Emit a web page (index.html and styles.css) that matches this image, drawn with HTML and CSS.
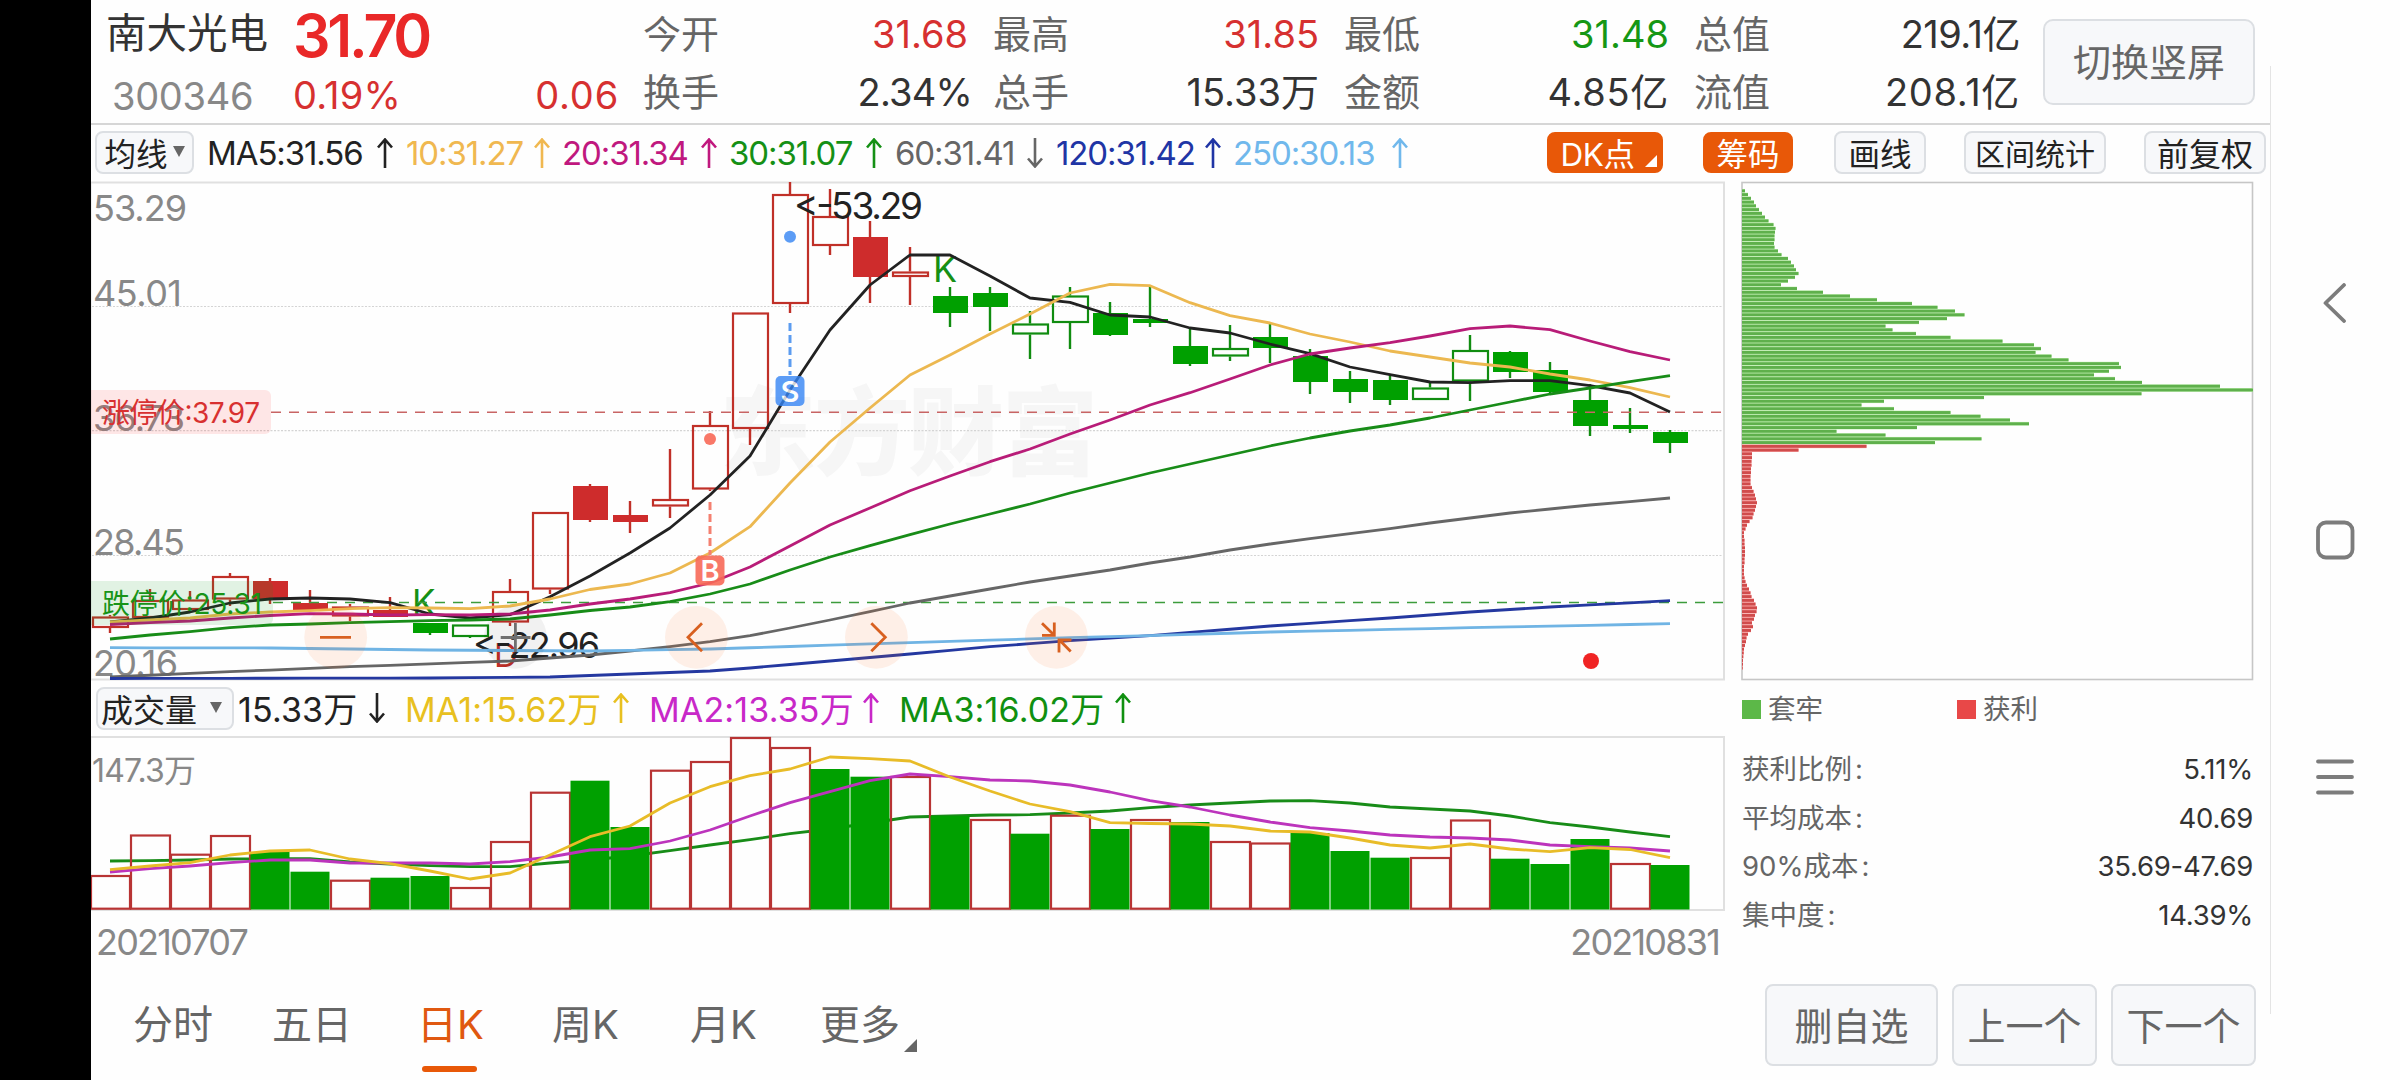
FILE: index.html
```html
<!DOCTYPE html>
<html lang="zh-CN">
<head>
<meta charset="utf-8">
<title>南大光电 300346</title>
<link rel="stylesheet" href="styles.css">
</head>
<body>
<div class="screen">
  <div class="cutout"></div>
  <main class="app">
    <header class="quote">
      <div class="stock">
        <div class="stock-name">南大光电</div>
        <div class="stock-code">300346</div>
      </div>
      <div class="price">
        <div class="price-last">31.70</div>
        <div class="price-change"><span>0.19%</span><span>0.06</span></div>
      </div>
      <dl class="metrics">
        <div class="metric m1"><dt>今开</dt><dd class="up">31.68</dd></div>
        <div class="metric m2"><dt>最高</dt><dd class="up">31.85</dd></div>
        <div class="metric m3"><dt>最低</dt><dd class="down">31.48</dd></div>
        <div class="metric m4"><dt>总值</dt><dd class="tight">219.1亿</dd></div>
        <div class="metric m1"><dt>换手</dt><dd class="tight pct">2.34%</dd></div>
        <div class="metric m2"><dt>总手</dt><dd>15.33万</dd></div>
        <div class="metric m3"><dt>金额</dt><dd class="loose">4.85亿</dd></div>
        <div class="metric m4"><dt>流值</dt><dd class="loose">208.1亿</dd></div>
      </dl>
      <button class="btn btn-rotate">切换竖屏</button>
    </header>

    <section class="toolbar">
      <button class="btn picker picker-ma">均线<i class="caret"></i></button>
      <div class="ma-list">
        <span class="ma ma5"><b>MA5:31.56</b><svg class="arr" viewBox="0 0 16 30"><path d="M8 1V30M1 9.500L8 1.500L15 9.500"/></svg></span>
        <span class="ma ma10"><b>10:31.27</b><svg class="arr" viewBox="0 0 16 30"><path d="M8 1V30M1 9.500L8 1.500L15 9.500"/></svg></span>
        <span class="ma ma20"><b>20:31.34</b><svg class="arr" viewBox="0 0 16 30"><path d="M8 1V30M1 9.500L8 1.500L15 9.500"/></svg></span>
        <span class="ma ma30"><b>30:31.07</b><svg class="arr" viewBox="0 0 16 30"><path d="M8 1V30M1 9.500L8 1.500L15 9.500"/></svg></span>
        <span class="ma ma60"><b>60:31.41</b><svg class="arr" viewBox="0 0 16 30"><path d="M8 0V29M1 20.500L8 28.500L15 20.500"/></svg></span>
        <span class="ma ma120"><b>120:31.42</b><svg class="arr" viewBox="0 0 16 30"><path d="M8 1V30M1 9.500L8 1.500L15 9.500"/></svg></span>
        <span class="ma ma250"><b>250:30.13</b><svg class="arr" viewBox="0 0 16 30"><path d="M8 1V30M1 9.500L8 1.500L15 9.500"/></svg></span>
      </div>
      <div class="tools">
        <button class="btn tool tool-dk">DK点<i class="corner"></i></button>
        <button class="btn tool tool-chip">筹码</button>
        <button class="btn tool tool-draw">画线</button>
        <button class="btn tool tool-range">区间统计</button>
        <button class="btn tool tool-adj">前复权</button>
      </div>
    </section>

    <div class="body">
      <div class="charts">
        <svg class="kline" id="kline" viewBox="91 181 1635 500"></svg>
        <div class="vol-head">
          <button class="btn picker picker-vol">成交量<i class="caret"></i></button>
          <span class="vol v0"><b>15.33万</b><svg class="arr" viewBox="0 0 16 30"><path d="M8 0V29M1 20.500L8 28.500L15 20.500"/></svg></span>
          <span class="vol v1"><b>MA1:15.62万</b><svg class="arr" viewBox="0 0 16 30"><path d="M8 1V30M1 9.500L8 1.500L15 9.500"/></svg></span>
          <span class="vol v2"><b>MA2:13.35万</b><svg class="arr" viewBox="0 0 16 30"><path d="M8 1V30M1 9.500L8 1.500L15 9.500"/></svg></span>
          <span class="vol v3"><b>MA3:16.02万</b><svg class="arr" viewBox="0 0 16 30"><path d="M8 1V30M1 9.500L8 1.500L15 9.500"/></svg></span>
        </div>
        <svg class="volume" id="volume" viewBox="91 736 1635 176"></svg>
        <div class="dates"><span>20210707</span><span>20210831</span></div>
      </div>
      <aside class="chips">
        <svg class="chip-chart" id="chips" viewBox="1741 181 513 500"></svg>
        <div class="legend">
          <span><i class="sq sq-green"></i>套牢</span>
          <span><i class="sq sq-red"></i>获利</span>
        </div>
        <dl class="stats">
          <div><dt>获利比例<i>:</i></dt><dd>5.11%</dd></div>
          <div><dt>平均成本<i>:</i></dt><dd>40.69</dd></div>
          <div><dt>90%成本<i>:</i></dt><dd>35.69-47.69</dd></div>
          <div><dt>集中度<i>:</i></dt><dd>14.39%</dd></div>
        </dl>
      </aside>
    </div>

    <footer class="footer">
      <nav class="tabs">
        <a class="tab">分时</a>
        <a class="tab t2">五日</a>
        <a class="tab t3 active">日K</a>
        <a class="tab t4">周K</a>
        <a class="tab t5">月K</a>
        <a class="tab more">更多<i class="corner"></i></a>
      </nav>
      <div class="actions">
        <button class="btn act wide">删自选</button>
        <button class="btn act">上一个</button>
        <button class="btn act">下一个</button>
      </div>
    </footer>
  </main>
  <div class="divider"></div>
  <nav class="sysnav">
    <svg viewBox="0 0 40 40"><path d="M29 2L10.500 20L29 38"/></svg>
    <svg viewBox="0 0 40 40"><rect x="3" y="2.500" width="34.500" height="35" rx="8"/></svg>
    <svg viewBox="0 0 40 40"><path d="M3 4.500H37M3 20H37M3 35.500H37"/></svg>
  </nav>
</div>
<script src="charts.js"></script>
</body>
</html>
```
FILE: styles.css
```css
* { box-sizing: border-box; margin: 0; padding: 0; }

body {
  width: 2400px;
  height: 1080px;
  overflow: hidden;
  background: #fefefe;
  color: #333;
  font-family: Inter, "Noto Sans CJK SC", sans-serif;
  font-size: 38px;
}

i { font-style: normal; }
b { font-weight: 400; }

.screen { display: flex; height: 1080px; }
.cutout { width: 91px; background: #000; }
.app { width: 2179px; display: flex; flex-direction: column; }

.btn {
  font: inherit;
  color: #666;
  background: #f7f8fa;
  border: 2px solid #dcdfe3;
  border-radius: 8px;
  white-space: nowrap;
  display: flex;
  align-items: center;
  justify-content: center;
}

/* quote header */
.quote {
  height: 125px;
  border-bottom: 2px solid #d6d6d6;
  display: flex;
  line-height: 58px;
}
.stock { width: 202px; padding: 5px 0 0 15px; }
.stock-name { font-size: 40.5px; }
.stock-code { padding: 4px 0 0 6px; color: #888; letter-spacing: -.3px; }
.price { width: 350px; }
.price-last {
  height: 66px;
  line-height: 71px;
  font-size: 59px;
  font-weight: 600;
  color: #e92828;
  letter-spacing: -3.2px;
}
.price-change {
  display: flex;
  justify-content: space-between;
  padding-right: 24px;
  color: #d63030;
}
.price-change span:first-child { letter-spacing: .2px; }
.price-change span:last-child { letter-spacing: .8px; }
.metrics {
  width: 1377px;
  padding-top: 5px;
  display: grid;
  grid-template-columns: 350px 351px 350px 326px;
  grid-auto-rows: 58px;
}
.metric { display: flex; justify-content: space-between; }
.m1, .m2, .m3 { padding-right: 25px; }
dt { color: #666; }
.up { color: #d63030; }
.down { color: #159715; }
.tight { letter-spacing: -.5px; }
.pct { letter-spacing: -.8px; margin-right: -4px; }
.loose { letter-spacing: .7px; }
.btn-rotate { margin: 19px 0 0 23px; width: 212px; height: 86px; border-radius: 10px; }

/* indicator toolbar */
.toolbar {
  height: 56px;
  padding: 6px 4px 0 4px;
  display: flex;
  align-items: flex-start;
  font-size: 33px;
}
.picker { color: #222; height: 43px; gap: 5px; font-size: 31.5px; padding-bottom: 2px; }
.picker-ma { width: 99px; }
.caret {
  border: 6.500px solid transparent;
  border-top: 11px solid #666;
  border-bottom: 0;
}
.ma-list { display: flex; padding-left: 13px; height: 43px; }
.ma, .vol { display: flex; align-items: center; white-space: nowrap; }
.ma b, .vol b { display: block; }
.ma b { letter-spacing: -1.1px; padding-top: 1px; }
.arr { width: 16px; height: 30px; fill: none; stroke: currentColor; stroke-width: 2.600px; }
.ma .arr, .vol .arr { flex: none; }
.ma5 { width: 199px; color: #222; } .ma5 b { width: 170px; }
.ma10 { width: 156px; color: #f0b850; } .ma10 b { width: 128px; }
.ma20 { width: 167px; color: #c0187e; } .ma20 b { width: 139px; }
.ma30 { width: 166px; color: #159015; } .ma30 b { width: 137px; }
.ma60 { width: 161px; color: #666; } .ma60 b { width: 132px; }
.ma120 { width: 177px; color: #2035a5; } .ma120 b { width: 149px; }
.ma250 { width: 176px; color: #70b8ec; } .ma250 b { width: 159px; }
.tools { margin-left: auto; display: flex; font-size: 31.5px; }
.tool { position: relative; height: 43px; color: #222; padding-bottom: 2px; }
.tool-dk, .tool-chip { background: #e85808; border-color: #e85808; color: #fff; height: 41px; margin-top: 1px; }
.tool-dk { width: 116px; margin-right: 40px; padding-right: 15px; letter-spacing: -.5px; }
.tool-chip { width: 90px; margin-right: 41px; }
.tool-draw { width: 92px; margin-right: 38px; }
.tool-range { width: 142px; margin-right: 38px; font-size: 30px; }
.tool-adj { width: 122px; font-size: 32px; }
.corner {
  position: absolute;
  border-left: 12px solid transparent;
  border-bottom: 12px solid currentColor;
}
.tool-dk .corner { right: 4px; bottom: 4px; }

/* charts */
.body { display: flex; justify-content: space-between; height: 794px; padding-right: 16px; }
.charts { width: 1635px; }
.kline, .volume, .chip-chart { display: block; }
.kline { width: 1635px; height: 500px; }
.volume { width: 1635px; height: 176px; }
.vol-head { height: 55px; padding: 6px 0 0 5px; display: flex; font-size: 34px; }
.picker-vol { width: 138px; gap: 13px; margin-right: 4px; font-size: 32px; justify-content: flex-start; padding-left: 3px; }
.vol { height: 41px; }
.vol b { letter-spacing: .15px; }
.v0 { width: 167px; color: #222; } .v0 b { width: 131px; }
.v1 { width: 244px; color: #e8c020; } .v1 b { width: 208px; }
.v2 { width: 250px; color: #c828c8; } .v2 b { width: 214px; }
.v3 { width: 240px; color: #109010; } .v3 b { width: 216px; }
.dates {
  display: flex;
  justify-content: space-between;
  padding: 3px 7px 0 5px;
  color: #888;
  font-size: 36px;
  letter-spacing: -1.8px;
  line-height: 54px;
}
svg text { font-family: Inter, "Noto Sans CJK SC", sans-serif; }

/* cost distribution */
.chips { width: 513px; }
.chip-chart { width: 513px; height: 500px; }
.legend { display: flex; height: 56px; padding-left: 1px; font-size: 27.500px; color: #666; line-height: 56px; }
.legend span { display: flex; align-items: center; gap: 7px; width: 215px; }
.sq { width: 19px; height: 19px; }
.sq-green { background: #5cb848; }
.sq-red { background: #e84848; }
.stats { padding: 8px 1px 0 1px; font-size: 27.500px; line-height: 48.600px; }
.stats div { display: flex; justify-content: space-between; }
.stats dd { letter-spacing: -.25px; }
.stats i { padding-left: 3px; }

/* footer */
.footer { height: 105px; display: flex; justify-content: space-between; padding: 9px 14px 0 42px; }
.tabs { display: flex; line-height: 82px; color: #666; font-size: 40px; }
.tab { position: relative; width: 139px; white-space: nowrap; }
.tab.t2 { width: 145px; }
.tab.t3 { width: 135px; }
.tab.t4 { width: 138px; }
.tab.t5 { width: 130px; }
.tab.active { color: #e05810; }
.tab.active::after {
  content: "";
  position: absolute;
  left: 5px;
  top: 82px;
  width: 55px;
  height: 6px;
  border-radius: 3px;
  background: #e85808;
}
.more .corner { left: 84px; top: 55px; border-width: 13px; border-right-width: 0; border-top-width: 0; }
.actions { display: flex; gap: 14px; }
.act { width: 145px; height: 82px; border-radius: 8px; padding-bottom: 4px; }
.act.wide { width: 173px; }

/* system navigation */
.divider { width: 1px; height: 948px; margin-top: 66px; background: #e4e4e4; }
.sysnav { padding: 283px 0 0 44px; display: flex; flex-direction: column; gap: 197px; }
.sysnav svg { width: 40px; height: 40px; fill: none; stroke: #7c7c7c; stroke-width: 3.800px; stroke-linecap: round; stroke-linejoin: round; }
```
FILE: charts.js
```js
const RED = '#c03028', FILL_RED = '#ce2c2c', GREEN = '#00a000', LINE_GREEN = '#108c10';
const cx = i => 110 + 40 * i;
const line = (x1, y1, x2, y2, c, w = 2.4, extra = '') =>
  `<line x1="${x1}" y1="${y1}" x2="${x2}" y2="${y2}" stroke="${c}" stroke-width="${w}" ${extra}/>`;
const poly = (ys, c) =>
  `<polyline fill="none" stroke="${c}" stroke-width="2.8" stroke-linejoin="round" points="${ys.map((y, i) => cx(i) + ',' + y).join(' ')}"/>`;
const text = (x, y, w, size, c, s, extra = '') =>
  `<text x="${x}" y="${y}" textLength="${w}" font-size="${size}" fill="${c}" ${extra}>${s}</text>`;
/* fills a list of [index, value] knots by linear interpolation */
const knots = ks => {
  const out = [];
  for (let k = 0; k < ks.length - 1; k++) {
    const [a, ya] = ks[k], [b, yb] = ks[k + 1];
    for (let i = a; i < b; i++) out[i] = ya + (yb - ya) * (i - a) / (b - a);
  }
  const last = ks[ks.length - 1];
  out[last[0]] = last[1];
  return out;
};

/* type: r/g = rising/falling colour, upper case = filled; [type, high, top, bottom, low] */
const candles = [
  ['r',615,616.5,628,633],['r',589,600,618,618],['r',591,599.5,610,610],['r',573,576,599.5,606],
  ['R',578,581,599,604],['R',590,603,610,610],['r',604,606.5,616.5,621],['R',597,610,617,617],
  ['G',623,623,633,635],['g',625,624.5,637,638],['r',579,591,622.5,626],['r',512,512,589.5,594],
  ['R',484,486,520,522],['R',501,515,522,533],['r',449,499,506.5,518],['r',411,425,489.5,491],
  ['r',313,312.5,429,445],['r',182,194,304,313],['r',189,216,246,255],['R',221,237,277,303],
  ['r',247,271.5,277,305],['G',287,296,313,327],['G',287,293,307,331],['g',311,323.5,334.5,359],
  ['g',287,295.5,323,349],['G',302,313,335,336],['G',287,319,323,327],['G',328,346,364,366],
  ['g',325,348,356.5,361],['G',324,337,348,363],['G',349,356,382,394],['G',371,379,392,403],
  ['G',375,380,400,405],['g',383,387.5,400,400],['g',335,350,381.5,401],['G',351,352,372,378],
  ['G',362,370,392,394],['G',384,400,426,436],['G',408,425,429,433],['G',430,432,443,453]];

const ma5 = [622,618,612,603,599,598,599,602.7,614,618,614.7,596.7,576,553,528,495,456,390,330,285,255,255,276,298,302.3,315,317,328,333,344,353.7,367,374.7,382,382.7,380.7,380.7,385.7,393,412];
const ma10 = [622,620,618,614,612,610.7,608.7,607.7,608,608.7,606,599,589.5,584,573,553,526.7,483,442,408,375,355,334,314,293,284.3,285.7,302.7,315.7,323,334,342,351,357,363,367,374,380,387.7,397];
const ma20 = [624.5,622.7,621,618,615.5,613.7,614,615,614.7,615,614,610,604,599,592.7,583,567,546,525,508,490.7,476,461.7,449,434,420,405,392.7,379,365,354,348,342.7,336,328.7,326,329.7,341,351.7,360];
const ma30 = [639,635,631.7,627.7,625,624,622.7,621.7,620.7,620,619,615,610.5,607,601.7,594,584,570,557,545.7,534.7,524,514,504,493,483,473,464,455,446,438,431,425,418,410,402,394,388,381.7,375.7];
const ma60 = knots([[0,677],[3,671.7],[6,666.7],[10,661],[11,658],[12,655],[13,651],[14,646.7],[15,641.7],[16,635.7],[17,628],[18,620],[19,611.7],[20,603],[21,596],[22,589],[23,582],[24,576],[25,570],[26,563],[27,557],[28,550],[29,544],[30,538.7],[31,533.7],[32,528.7],[33,523],[34,518],[35,513],[36,509],[37,505],[38,501.7],[39,498]]);
const ma120 = knots([[0,678.5],[8,678],[11,677],[13,674],[15,671],[16,668],[18,661],[20,654],[22,646.7],[24,640.7],[26,635.7],[29,626],[32,618],[34,612],[36,607],[39,600.7]]);
const ma250 = knots([[0,647.7],[4,648],[8,650],[12,651],[15,649],[20,642.7],[24,637.7],[26,635.7],[29,632],[34,627.7],[39,623.7]]);

let k = '';
k += text(720, 467, 378, 96, '#f6f6f6', '东方财富', 'font-weight="900"');
for (const y of [306.5, 430.7, 555.5]) k += line(92, y, 1724, y, '#d4d4d4', 1.2, 'stroke-dasharray="2 1.500"');
k += '<rect x="90.500" y="182.500" width="1633.500" height="497" fill="none" stroke="#e0e0e0" stroke-width="2"/>';
k += text(93, 221, 94, 36, '#888', '53.29') + text(93, 306, 89, 36, '#888', '45.01') +
     text(93, 430.5, 92, 36, '#888', '36.73') + text(93, 555, 92, 36, '#888', '28.45') +
     text(93, 676, 85, 36, '#888', '20.16');
candles.forEach(([t, hi, a, b, lo], i) => {
  const x = cx(i), up = t.toLowerCase() === 'r', c = up ? RED : LINE_GREEN;
  if (hi < a) k += line(x, hi, x, a, c);
  if (lo > b) k += line(x, b, x, lo, c);
  k += t === t.toUpperCase()
    ? `<rect x="${x - 17}" y="${a}" width="35" height="${b - a}" fill="${up ? FILL_RED : GREEN}"/>`
    : `<rect x="${x - 17}" y="${a + 1}" width="35" height="${b - a - 2}" fill="none" stroke="${c}" stroke-width="2.200"/>`;
});
k += text(412, 615, 20, 35, '#159015', 'K') + text(933, 281.5, 21, 36, '#159015', 'K');
k += text(494, 667, 24, 33, '#c03028', 'D');
k += text(473, 657.5, 127, 36, '#222', '&lt;-22.96') + text(794, 218.5, 129, 37, '#222', '&lt;-53.29');
k += line(271, 412.3, 1724, 412.3, '#c86464', 1.6, 'stroke-dasharray="10 8"');
k += line(273, 602.5, 1724, 602.5, '#3c9c3c', 1.6, 'stroke-dasharray="10 8"');
k += poly(ma5, '#222') + poly(ma10, '#ecb850') + poly(ma20, '#b81c78') + poly(ma30, '#188c18') +
     poly(ma60, '#666') + poly(ma120, '#2438a0') + poly(ma250, '#70b4e4');

k += '<path d="M91 390H265a6 6 0 0 1 6 6V428a6 6 0 0 1 -6 6H91z" fill="#ff2020" fill-opacity=".11"/>';
k += text(102, 423, 158, 28, '#d83030', '涨停价:37.97');
k += '<path d="M91 581H267a6 6 0 0 1 6 6V619a6 6 0 0 1 -6 6H91z" fill="#10a020" fill-opacity=".12"/>';
k += text(102, 613.5, 160, 28, '#189418', '跌停价:25.31');

k += line(790, 323, 790, 375, '#5c9cf0', 3, 'stroke-dasharray="8 4"') +
     '<circle cx="790" cy="236.700" r="6" fill="#5c9cf5"/>' +
     '<g opacity=".8"><rect x="775.500" y="376" width="29" height="30" rx="5" fill="#3585f5"/>' +
     '<text x="790" y="401.500" font-size="29" font-weight="600" text-anchor="middle" fill="#fff">S</text></g>' +
     line(710, 502, 710, 555, '#f48070', 3, 'stroke-dasharray="8 4"') +
     '<circle cx="710" cy="439" r="6" fill="#f97868"/>' +
     '<g opacity=".9"><rect x="695.500" y="555.500" width="29" height="30" rx="5" fill="#f86a58"/>' +
     '<text x="710" y="581" font-size="29" font-weight="600" text-anchor="middle" fill="#fff">B</text></g>';
k += '<circle cx="1591" cy="661" r="8" fill="#f02424"/>';

for (const x of [335.7, 696.4, 876.4, 1056.4]) k += `<circle cx="${x}" cy="637.300" r="31.400" fill="#ff6a20" fill-opacity=".1"/>`;
k += '<circle cx="515.400" cy="637.300" r="31.400" fill="#000" fill-opacity=".05"/>';
k += '<g fill="none" stroke="#d86020" stroke-width="2.800"><path d="M320 637.300H351M702 623.300L688 637.300L702 651.300M871.300 623.300L885.300 637.300L871.300 651.300M1042 623.300L1054 635M1054.300 622.500V635.300H1042M1071.400 640H1059V652.500M1059.400 640L1070.700 651.500"/>' +
     '<path stroke="#707070" d="M500.700 637.500H530.500M515.400 623V652"/></g>';
document.getElementById('kline').innerHTML = k;

/* volume: [top, filled] */
const vols = [[876,0],[835.5,0],[854.7,0],[836,0],[852,1],[871.7,1],[880.7,0],[877.7,1],[876,1],[888,0],
  [842,0],[792.7,0],[780.7,1],[827,1],[770.7,0],[762,0],[738,0],[748,0],[769,1],[776.7,1],
  [777,0],[816,1],[820,0],[833.7,1],[815.7,0],[829,1],[820,0],[822,1],[842,0],[843.5,0],
  [833,1],[851,1],[857.7,1],[858,0],[820.5,0],[858.7,1],[864,1],[839,1],[864,0],[865,1]];
const vy = [869.7,866,862.7,855,851,850,859,863.7,871,879,873,855,836.7,826,803,786.7,775.7,769,757,758.7,761,777,791,804,811.7,822.7,823.5,824,826,831,832,838,845,848,844,849,851.7,847.7,849.5,857.7];
const vm = [872,868.7,866,862.7,860,860,863,863,863,864,861.7,857,850,848.7,841,830,816,802.7,791.7,780.7,774,776.7,780,781,785,792,800.7,807,815,822,827.7,831,835,837,838,840,845,846.7,848,851];
const vg = [861,860.7,860,859,858.7,858.7,862,864,865.7,866.7,866.7,863,860,856,850.7,845,839.7,833.7,829,823,817,816,815,814.7,813,811,807.7,805,803,801,800.7,803,807,809,811,816,822.7,827,832,836.7];
let v = '<rect x="90.500" y="737" width="1633.500" height="173" fill="none" stroke="#e0e0e0" stroke-width="2"/>';
v += text(92, 782, 104, 32, '#888', '147.3万');
/* the long average runs behind the filled bars, the other two in front */
v += poly(vg, '#188c18');
vols.forEach(([y, f], i) => {
  const x = 90 + 40 * i;
  v += f ? `<rect x="${x + .5}" y="${y}" width="39" height="${909.5 - y}" fill="${GREEN}"/>`
         : `<rect x="${x + 1}" y="${y}" width="39" height="${908.7 - y}" fill="none" stroke="#b83434" stroke-width="2.200"/>`;
});
v += poly(vm, '#bc34bc') + poly(vy, '#e8bc28');
document.getElementById('volume').innerHTML = v;

/* cost distribution, bar lengths in px from the highest price down */
const trapped = [3,6,9,12,14,17,20,23,26.500,31.500,33.500,33,32.500,32.500,32,32.500,36,39.500,46,49,52,54,56.500,53,46,39,55,81,108,135,170,195.500,213,222.500,205,177,143.500,150.500,174,208.500,260.500,292,299,293.500,309.500,326.500,377,379,367,352,373,400,478,511,399.500,242,142,119.500,152,208.500,238.500,268,287,175,94.500,143.500,239.500,193];
const profit = [124.500,56.500,10,10,9.500,9.500,9,9,8.500,8.500,8.500,10,11.500,13,14,15,14,13,11.500,10.500,7.500,5,3.500,2,2,2.500,2.500,3,3,3,2.500,2.500,2,2,2,2.500,3.500,5,7,8.500,9.500,12,13.500,15,14.500,13,12,10,11,9,6,4.500,4,3,2,1.700,1.300,1,1,.7];
let c = '<rect x="1742" y="182.500" width="510.500" height="497" fill="none" stroke="#c6c6c6" stroke-width="1.600"/>';
[...trapped, ...profit].forEach((w, i) => {
  const y = 189.4 + i * 3.757, g = i < trapped.length;
  c += `<rect x="1742" y="${y - .45}" width="${w}" height="3.757" fill="${g ? '#c0f0b0' : '#ffb0b0'}"/>` +
       `<rect x="1742" y="${y}" width="${w}" height="2.900" fill="${g ? '#5fb04c' : '#d04c4c'}"/>`;
});
document.getElementById('chips').innerHTML = c;
```
